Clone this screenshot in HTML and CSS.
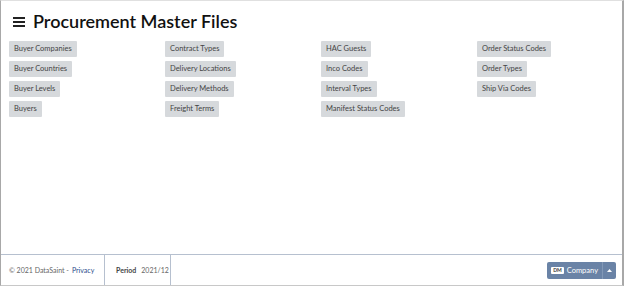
FILE: index.html
```html
<!DOCTYPE html>
<html>
<head>
<meta charset="utf-8">
<link rel="stylesheet" href="styles.css">
</head>
<body>
<div class="frame">
  <main class="main">
    <header class="header">
      <svg class="burger" width="12" height="10" viewBox="0 0 12 10"><rect x="0" y="0" width="12" height="2" fill="#222"/><rect x="0" y="4" width="12" height="2" fill="#222"/><rect x="0" y="8" width="12" height="2" fill="#222"/></svg>
      <h1 class="title">Procurement Master Files</h1>
    </header>
    <div class="grid">
      <div class="col">
        <span class="tag">Buyer Companies</span>
        <span class="tag">Buyer Countries</span>
        <span class="tag">Buyer Levels</span>
        <span class="tag">Buyers</span>
      </div>
      <div class="col">
        <span class="tag">Contract Types</span>
        <span class="tag">Delivery Locations</span>
        <span class="tag">Delivery Methods</span>
        <span class="tag">Freight Terms</span>
      </div>
      <div class="col">
        <span class="tag">HAC Guests</span>
        <span class="tag">Inco Codes</span>
        <span class="tag">Interval Types</span>
        <span class="tag">Manifest Status Codes</span>
      </div>
      <div class="col">
        <span class="tag">Order Status Codes</span>
        <span class="tag">Order Types</span>
        <span class="tag">Ship Via Codes</span>
      </div>
    </div>
  </main>
  <footer class="footer">
    <div class="copy">© 2021 DataSaint - <a class="link">Privacy</a></div>
    <div class="period"><b>Period</b><span>2021/12</span></div>
    <div class="spacer"></div>
    <div class="company">
      <span class="company-main"><span class="badge">DM</span>Company</span>
      <span class="company-caret"><svg width="5" height="3" viewBox="0 0 5 3"><path d="M0 3 L2.5 0 L5 3 Z" fill="#fff"/></svg></span>
    </div>
  </footer>
</div>
</body>
</html>
```
FILE: styles.css
```css
html, body {
  margin: 0;
  padding: 0;
  background: #fff;
}
body {
  font-family: "Lato", "Open Sans", sans-serif;
  color: #333;
}
.frame {
  width: 624px;
  height: 286px;
  box-sizing: border-box;
  border-top: 1px solid #e0e0e0;
  border-left: 1px solid #a8a8a8;
  border-right: 2px solid #a8a8a8;
  border-bottom: 1px solid #c8c8c8;
  display: flex;
  flex-direction: column;
}
.main {
  flex: 1;
}
.header {
  display: flex;
  align-items: center;
  gap: 8px;
  padding: 7px 0 0 12px;
  height: 26px;
}
.burger {
  display: block;
  margin-top: 2px;
}
.title {
  margin: 0;
  font-size: 18px;
  font-weight: 600;
  color: #111;
  line-height: 24px;
}
.grid {
  display: grid;
  grid-template-columns: repeat(4, 156px);
  padding: 7px 0 0 8px;
}
.col {
  display: flex;
  flex-direction: column;
  align-items: flex-start;
  gap: 4px;
}
.tag {
  display: inline-block;
  background: #d6d9dc;
  color: #444;
  font-size: 7.5px;
  line-height: 16px;
  height: 16px;
  padding: 0 5px;
  border-radius: 1px;
  white-space: nowrap;
}
.footer {
  height: 30px;
  border-top: 1px solid #b6c0cf;
  display: flex;
  align-items: center;
  font-size: 7px;
  color: #666;
  white-space: nowrap;
}
.copy {
  box-sizing: border-box;
  padding: 0 8px;
  width: 104px;
  height: 100%;
  display: flex;
  align-items: center;
  border-right: 1px solid #b6c0cf;
}
.link {
  color: #2b4c8c;
  margin-left: 3px;
}
.period {
  box-sizing: border-box;
  width: 66px;
  padding: 0 0 0 11px;
  height: 100%;
  display: flex;
  align-items: center;
  gap: 5px;
  border-right: 1px solid #b6c0cf;
}
.period b {
  color: #444;
  font-weight: 700;
}
.spacer {
  flex: 1;
}
.company {
  display: flex;
  height: 17px;
  margin-right: 6px;
  margin-top: 1px;
  background: #6a83a6;
  border-radius: 2px;
  color: #fff;
  font-size: 7.5px;
}
.company-main {
  display: flex;
  align-items: center;
  padding: 0 4px 0 4px;
}
.badge {
  background: #fff;
  color: #333;
  font-size: 5px;
  font-weight: 700;
  padding: 0 2px;
  line-height: 7px;
  margin-right: 3px;
  border-radius: 1px;
}
.company-caret {
  display: flex;
  align-items: center;
  justify-content: center;
  width: 13px;
  border-left: 1px solid #8298b6;
}
```
